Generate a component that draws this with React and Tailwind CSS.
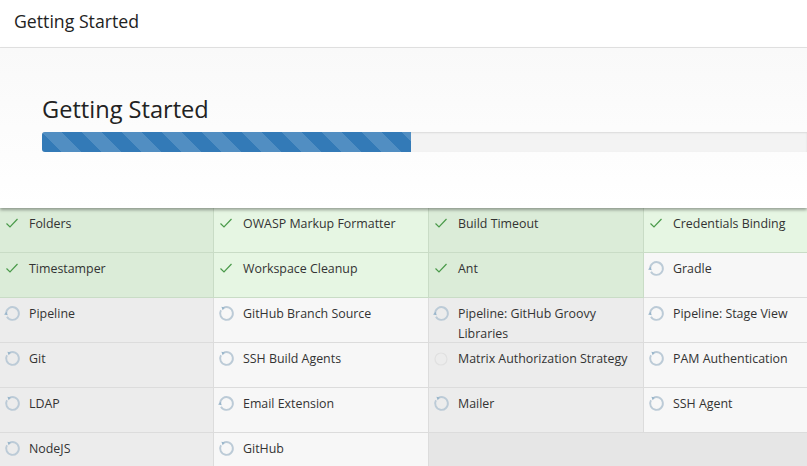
import React from 'react'

const plugins = [
  { name: 'Folders', state: 'done' },
  { name: 'OWASP Markup Formatter', state: 'done' },
  { name: 'Build Timeout', state: 'done' },
  { name: 'Credentials Binding', state: 'done' },
  { name: 'Timestamper', state: 'done' },
  { name: 'Workspace Cleanup', state: 'done' },
  { name: 'Ant', state: 'done' },
  { name: 'Gradle', state: 'spin', rot: -60 },
  { name: 'Pipeline', state: 'spin', rot: -60 },
  { name: 'GitHub Branch Source', state: 'spin', rot: 0 },
  { name: 'Pipeline: GitHub Groovy Libraries', state: 'spin', rot: -60 },
  { name: 'Pipeline: Stage View', state: 'spin', rot: -60 },
  { name: 'Git', state: 'spin', rot: 0 },
  { name: 'SSH Build Agents', state: 'spin', rot: 0 },
  { name: 'Matrix Authorization Strategy', state: 'wait' },
  { name: 'PAM Authentication', state: 'spin', rot: 0 },
  { name: 'LDAP', state: 'spin', rot: 0 },
  { name: 'Email Extension', state: 'spin', rot: -60 },
  { name: 'Mailer', state: 'spin', rot: 0 },
  { name: 'SSH Agent', state: 'spin', rot: 0 },
  { name: 'NodeJS', state: 'spin', rot: 0 },
  { name: 'GitHub', state: 'spin', rot: 0 },
]

function Check() {
  return (
    <svg width="14" height="14" viewBox="0 0 14 14" className="mt-[2px] ml-[1px]">
      <path d="M1.5 7.5 L5 11 L12.5 3" fill="none" stroke="#4a9a4a" strokeWidth="1.2" />
    </svg>
  )
}

// spinner frame, rot = rotation in degrees
function Spin({ rot }) {
  return (
    <svg width="17" height="17" viewBox="0 0 16 16" className="mt-[1px]" style={{ transform: `rotate(${rot}deg)` }}>
      <path d="M5 2.8 A6 6 0 1 1 2.8 5" fill="none" stroke="#bccbd7" strokeWidth="1.8" />
      <path d="M3.2 1.6 L6.6 2.4 L4.4 4.9 Z" fill="#9ab6cb" />
    </svg>
  )
}

function Wait() {
  return (
    <svg width="16" height="16" viewBox="0 0 16 16" className="mt-[2px]">
      <circle cx="8" cy="8" r="6" fill="none" stroke="#e0e0e0" strokeWidth="1.2" />
    </svg>
  )
}

function Cell({ p, i }) {
  const odd = i % 2 === 0
  const bg = p.state === 'done'
    ? (odd ? 'bg-[#dbecd8]' : 'bg-[#e6f6e3]')
    : (odd ? 'bg-[#ececec]' : 'bg-[#f7f7f7]')
  const border = p.state === 'done' ? 'border-[#c9dcc6]' : 'border-[#dcdcdc]'
  return (
    <div className={`${bg} ${border} border-r border-b h-[45px] flex items-start pl-[4px] pt-[6px] pr-2`}>
      <div className="w-[16px] shrink-0 mr-[9px]">
        {p.state === 'done' && <Check />}
        {p.state === 'spin' && <Spin rot={p.rot} />}
        {p.state === 'wait' && <Wait />}
      </div>
      <span className="text-[12.4px] leading-5 text-[#333]">{p.name}</span>
    </div>
  )
}

export default function App() {
  return (
    <div className="w-[807px] h-[466px] overflow-hidden bg-[#e6e6e6] font-['Segoe_UI','Open_Sans',sans-serif]">
      <div className="h-[48px] bg-white border-b border-[#e3e3e3] pl-[14px] flex items-center">
        <h1 className="text-[17.7px] text-[#222] -mt-1">Getting Started</h1>
      </div>
      <div className="relative z-10 h-[160px] bg-gradient-to-b from-[#f9f9f9] to-white pl-[42px] pt-[45px] shadow-[0_2px_3px_rgba(0,0,0,0.35)]">
        <h2 className="text-[23.6px] leading-8 text-[#222]">Getting Started</h2>
        <div className="mt-[7px] h-5 bg-[#f3f3f3] rounded-l-[3px] shadow-[inset_0_1px_2px_rgba(0,0,0,0.1)] overflow-hidden">
          <div className="h-full w-[369px] bg-[#337ab7] bg-[linear-gradient(45deg,rgba(255,255,255,0.15)_25%,transparent_25%,transparent_50%,rgba(255,255,255,0.15)_50%,rgba(255,255,255,0.15)_75%,transparent_75%,transparent)] bg-[length:40px_40px]" />
        </div>
      </div>
      <div className="grid grid-cols-[214px_215px_215px_215px] w-[859px] shadow-[0_1px_2px_rgba(0,0,0,0.1)]">
        {plugins.map((p, i) => <Cell key={p.name} p={p} i={i} />)}
      </div>
    </div>
  )
}
